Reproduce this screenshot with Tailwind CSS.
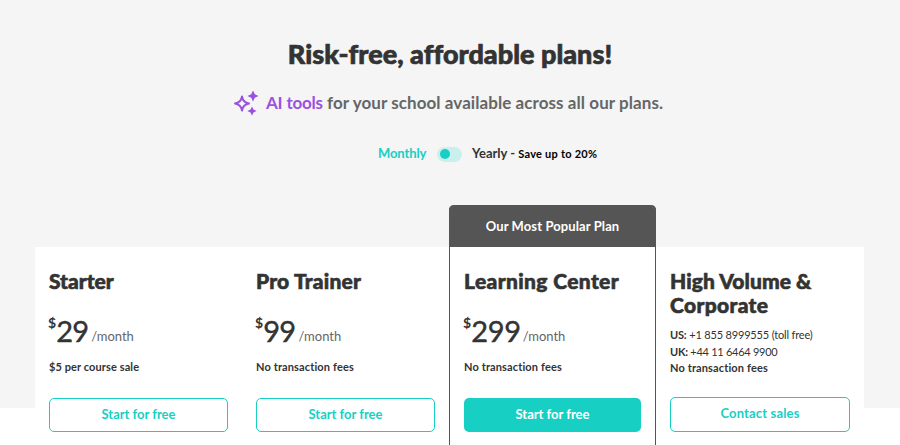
<!DOCTYPE html>
<html lang="en">

<head>
    <meta charset="UTF-8">
    <meta name="viewport" content="width=device-width, initial-scale=1.0">
    <title>Pricing</title>
    <script src="https://cdn.jsdelivr.net/npm/@tailwindcss/browser@4"></script>
</head>

<body class="h-[445px] overflow-hidden bg-white font-['Lato',sans-serif] text-[#333] whitespace-nowrap">
    <div class="h-[408px] bg-[#f5f5f5] pt-[36px]">
        <!-- Heading -->
        <h1 class="h-9 text-center text-[27px] leading-9 font-black tracking-[0.02px] [-webkit-text-stroke:0.7px_#333]">Risk-free, affordable plans!</h1>

        <div class="mt-4 flex h-[30px] items-center pl-[233px]">
            <svg class="h-[26px] w-[26px] shrink-0" viewBox="0 0 26 26" fill="#9b51e0">
                <path d="M9 6.5Q10 12.5 16 13.5Q10 14.5 9 20.5Q8 14.5 2 13.5Q8 12.5 9 6.5Z" fill="none" stroke="#9b51e0" stroke-width="2" stroke-linejoin="round" />
                <path d="M20 0.5L21.8 4.2L25.5 6L21.8 7.8L20 11.5L18.2 7.8L14.5 6L18.2 4.2Z" />
                <path d="M19 16.5L20.5 19.6L23.6 21L20.5 22.4L19 25.5L17.5 22.4L14.4 21L17.5 19.6Z" />
            </svg>
            <p class="ml-[7px] text-[17px] font-bold tracking-[0.07px] text-[#666]"><span class="tracking-[-0.2px] text-[#9b51e0]">AI tools</span> for your school available across all our plans.</p>
        </div>

        <!-- Billing period -->
        <div class="mt-[26px] flex h-5 items-center pl-[378px] text-[13px] font-bold">
            <span class="w-[59px] tracking-[-0.1px] text-[#17cfc3]">Monthly</span>
            <span class="flex h-[15px] w-[25px] items-center rounded-full bg-[#c9f0ec] pl-[3px]">
                <span class="h-[10px] w-[10px] rounded-full bg-[#17cfc3]"></span>
            </span>
            <span class="ml-[10px]">Yearly - <span class="text-[11px] tracking-[0.24px] text-black">Save up to 20%</span></span>
        </div>

        <!-- Plans -->
        <div class="mt-[41px] flex items-end pl-[35px]">
            <div class="h-[198px] w-[207px] bg-white px-[14px] pt-[22px]">
                <h2 class="h-6 text-[21px] leading-6 font-black [-webkit-text-stroke:0.6px_#333]">Starter</h2>
                <div class="mt-[20px] flex h-9 items-start">
                    <span class="-ml-px text-[14px] leading-5 font-bold">$</span>
                    <span class="text-[29px] leading-9 tracking-[-0.8px] [-webkit-text-stroke:0.4px_#333]">29</span>
                    <span class="ml-[3px] mt-[13px] text-[13px] leading-5 text-[#666]">/month</span>
                </div>
                <p class="mt-[10px] h-4 text-[11px] leading-4 font-bold tracking-[0.1px]">$5 per course sale</p>
                <button class="mt-[23px] h-[34px] w-[179px] rounded-[5px] border border-[#17cfc3] text-[13px] font-bold text-[#17cfc3]">Start for free</button>
            </div>
            <div class="h-[198px] w-[207px] bg-white px-[14px] pt-[22px]">
                <h2 class="h-6 text-[21px] leading-6 font-black tracking-[0.2px] [-webkit-text-stroke:0.6px_#333]">Pro Trainer</h2>
                <div class="mt-[20px] flex h-9 items-start">
                    <span class="-ml-px text-[14px] leading-5 font-bold">$</span>
                    <span class="text-[29px] leading-9 tracking-[-0.6px] [-webkit-text-stroke:0.4px_#333]">99</span>
                    <span class="ml-[3px] mt-[13px] text-[13px] leading-5 text-[#666]">/month</span>
                </div>
                <p class="mt-[10px] h-4 text-[11px] leading-4 font-bold tracking-[0.13px]">No transaction fees</p>
                <button class="mt-[23px] h-[34px] w-[179px] rounded-[5px] border border-[#17cfc3] text-[13px] font-bold text-[#17cfc3]">Start for free</button>
            </div>
            <div class="h-[240px] w-[207px] rounded-t-[5px] border-x border-[#555] bg-white">
                <div class="-mx-px h-[42px] rounded-t-[5px] bg-[#555] text-center text-[13px] leading-[42px] font-bold tracking-[0.1px] text-white">Our Most Popular Plan</div>
                <div class="px-[14px] pt-[22px]">
                    <h2 class="h-6 text-[21px] leading-6 font-black tracking-[0.37px] [-webkit-text-stroke:0.6px_#333]">Learning Center</h2>
                    <div class="mt-[20px] flex h-9 items-start">
                        <span class="-ml-px text-[14px] leading-5 font-bold">$</span>
                        <span class="text-[29px] leading-9 tracking-[-0.3px] [-webkit-text-stroke:0.4px_#333]">299</span>
                        <span class="ml-[2px] mt-[13px] text-[13px] leading-5 text-[#666]">/month</span>
                    </div>
                    <p class="mt-[10px] h-4 text-[11px] leading-4 font-bold tracking-[0.13px]">No transaction fees</p>
                    <button class="mt-[23px] h-[34px] w-[177px] rounded-[5px] bg-[#17cfc3] text-[13px] font-bold text-white">Start for free</button>
                </div>
            </div>
            <div class="h-[198px] w-[208px] bg-white px-[14px] pt-[22px]">
                <h2 class="h-12 text-[21px] leading-6 font-black tracking-[0.08px] [-webkit-text-stroke:0.6px_#333]">High Volume &amp;<br><span class="tracking-[0.35px]">Corporate</span></h2>
                <div class="mt-[10px] text-[11px] leading-[16.7px]">
                    <p class="tracking-[-0.17px]"><b>US:</b> +1 855 8999555 (toll free)</p>
                    <p class="tracking-[-0.27px]"><b>UK:</b> +44 11 6464 9900</p>
                    <p class="font-bold tracking-[0.13px]">No transaction fees</p>
                </div>
                <button class="mt-[20px] h-[35px] w-[180px] rounded-[5px] border border-[#17cfc3] pb-px text-[13px] font-bold tracking-[0.15px] text-[#17cfc3]">Contact sales</button>
            </div>
        </div>
    </div>
</body>

</html>
